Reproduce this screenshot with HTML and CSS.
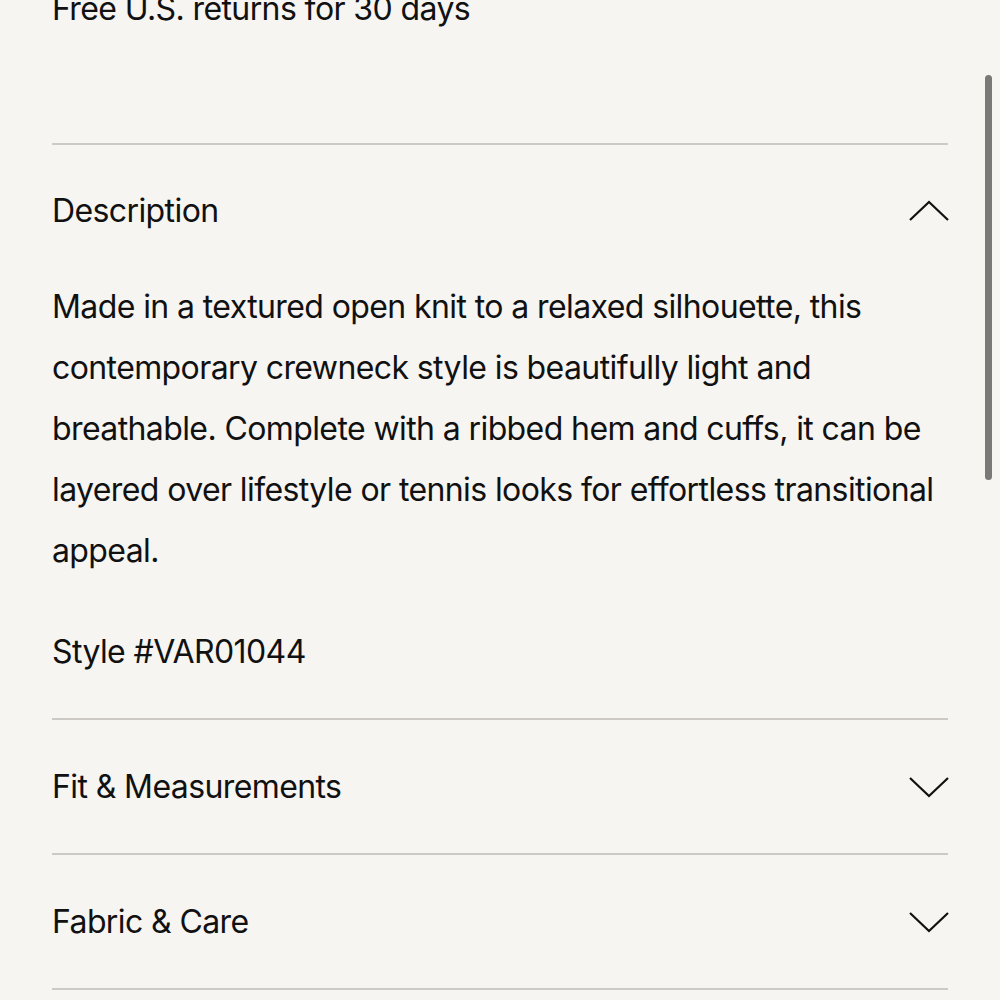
FILE: index.html
```html
<!DOCTYPE html>
<html lang="en">
<head>
  <meta charset="UTF-8">
  <meta name="viewport" content="width=device-width, initial-scale=1.0">
  <title>Product Details</title>
  <link rel="stylesheet" href="styles.css">
</head>
<body>
  <div class="detalhes">
    <p class="frete">Free U.S. returns for 30 days</p>

    <div class="secao aberta">
      <div class="cabecalho">
        <span>Description</span>
        <svg class="seta" width="42" height="22" viewBox="0 0 42 22"><path d="M2 20 L21 2 L40 20"/></svg>
      </div>
      <div class="conteudo">
        <p>Made in a textured open knit to a relaxed silhouette, this<br>
          contemporary crewneck style is beautifully light and<br>
          breathable. Complete with a ribbed hem and cuffs, it can be<br>
          layered over lifestyle or tennis looks for effortless transitional<br>
          appeal.</p>
        <p>Style #VAR01044</p>
      </div>
    </div>

    <div class="secao">
      <div class="cabecalho">
        <span>Fit &amp; Measurements</span>
        <svg class="seta" width="42" height="22" viewBox="0 0 42 22"><path d="M2 2 L21 20 L40 2"/></svg>
      </div>
    </div>

    <div class="secao">
      <div class="cabecalho">
        <span>Fabric &amp; Care</span>
        <svg class="seta" width="42" height="22" viewBox="0 0 42 22"><path d="M2 2 L21 20 L40 2"/></svg>
      </div>
    </div>
  </div>

  <div class="rolagem"></div>
</body>
</html>
```

FILE: styles.css
```css
body {
  font-family: Inter, "Liberation Sans", Arial, sans-serif;
  margin: 0;
  background-color: #f6f5f1;
  color: #111;
  overflow: hidden;
}
.detalhes {
  margin: -22px 52px 0 52px;
  font-size: 32px;
  letter-spacing: -0.6px;
  line-height: 61px;
}
.detalhes p {
  margin: 0;
  white-space: nowrap;
}
.frete {
  margin-bottom: 104px !important;
}
.secao {
  border-top: 2px solid #cdc9c4;
}
.secao:last-child {
  border-bottom: 2px solid #cdc9c4;
}
.cabecalho {
  height: 133px;
  display: flex;
  align-items: center;
  justify-content: space-between;
}
.aberta .cabecalho {
  height: 131px;
}
.seta {
  fill: none;
  stroke: #111;
  stroke-width: 2.2;
  margin-right: -2px;
}
.conteudo {
  padding-bottom: 36px;
}
.conteudo p + p {
  margin-top: 40px;
}
.rolagem {
  position: fixed;
  top: 75px;
  right: 8px;
  width: 7px;
  height: 405px;
  border-radius: 4px;
  background: #7a7977;
}
```
